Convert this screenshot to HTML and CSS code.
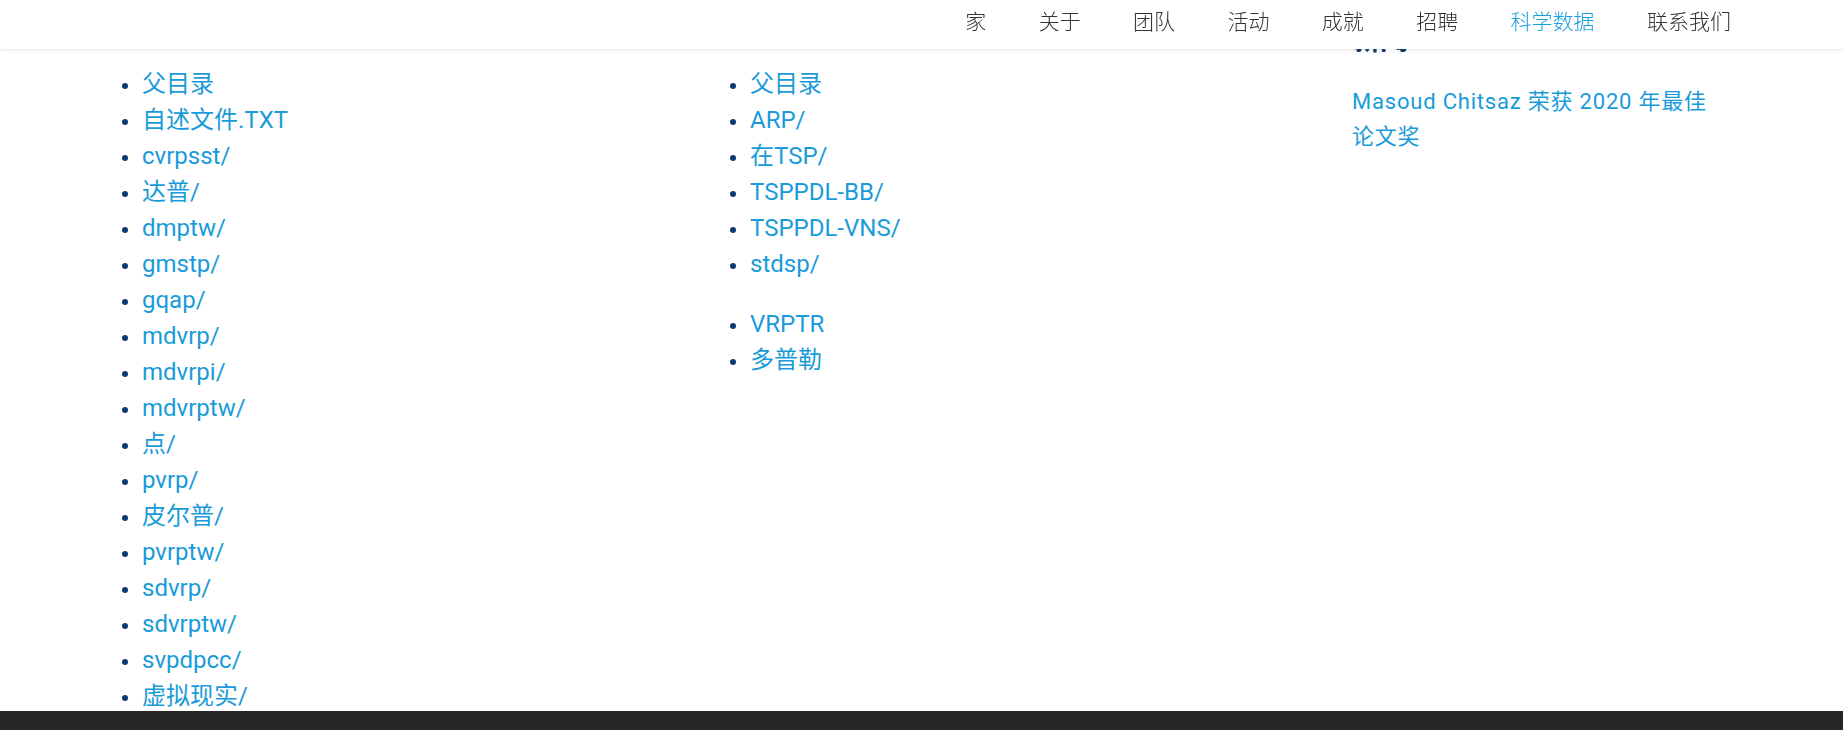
FILE: index.html
```html
<!DOCTYPE html>
<html lang="zh-CN">
<head>
<meta charset="utf-8">
<title>科学数据</title>
<link rel="stylesheet" href="styles.css">
</head>
<body>
<header class="site-header">
  <nav class="nav">
    <a class="nav-item" href="#">家</a>
    <a class="nav-item" href="#">关于</a>
    <a class="nav-item" href="#">团队</a>
    <a class="nav-item" href="#">活动</a>
    <a class="nav-item" href="#">成就</a>
    <a class="nav-item" href="#">招聘</a>
    <a class="nav-item nav-active" href="#">科学数据</a>
    <a class="nav-item" href="#">联系我们</a>
  </nav>
</header>
<main class="content">
  <section class="col col-one">
    <ul class="dir-list">
      <li><a href="#">父目录</a></li>
      <li><a href="#">自述文件.TXT</a></li>
      <li><a href="#">cvrpsst/</a></li>
      <li><a href="#">达普/</a></li>
      <li><a href="#">dmptw/</a></li>
      <li><a href="#">gmstp/</a></li>
      <li><a href="#">gqap/</a></li>
      <li><a href="#">mdvrp/</a></li>
      <li><a href="#">mdvrpi/</a></li>
      <li><a href="#">mdvrptw/</a></li>
      <li><a href="#">点/</a></li>
      <li><a href="#">pvrp/</a></li>
      <li><a href="#">皮尔普/</a></li>
      <li><a href="#">pvrptw/</a></li>
      <li><a href="#">sdvrp/</a></li>
      <li><a href="#">sdvrptw/</a></li>
      <li><a href="#">svpdpcc/</a></li>
      <li><a href="#">虚拟现实/</a></li>
    </ul>
  </section>
  <section class="col col-two">
    <ul class="dir-list">
      <li><a href="#">父目录</a></li>
      <li><a href="#">ARP/</a></li>
      <li><a href="#">在TSP/</a></li>
      <li><a href="#">TSPPDL-BB/</a></li>
      <li><a href="#">TSPPDL-VNS/</a></li>
      <li><a href="#">stdsp/</a></li>
    </ul>
    <ul class="dir-list">
      <li><a href="#">VRPTR</a></li>
      <li><a href="#">多普勒</a></li>
    </ul>
  </section>
  <aside class="col col-three">
    <h2 class="news-title">新闻</h2>
    <p class="news-item"><a href="#">Masoud Chitsaz 荣获 2020 年最佳论文奖</a></p>
  </aside>
</main>
<footer class="site-footer"></footer>
</body>
</html>
```
FILE: styles.css
```css
html, body {
  margin: 0;
  padding: 0;
}
body {
  background: #ffffff;
  font-family: Roboto, "Noto Sans CJK SC", sans-serif;
  color: #333333;
}
a {
  text-decoration: none;
}

.site-header {
  position: fixed;
  top: 0;
  left: 0;
  right: 0;
  height: 49px;
  background: #ffffff;
  box-shadow: 0 1px 4px rgba(0, 0, 0, 0.10);
  z-index: 10;
}
.nav {
  display: flex;
  justify-content: flex-end;
  gap: 52.4px;
  padding-right: 112px;
  height: 49px;
}
.nav-item {
  font-family: "Noto Sans CJK SC", sans-serif;
  font-weight: 300;
  font-size: 21px;
  line-height: 40px;
  color: #333333;
}
.nav-active {
  color: #1aa0de;
}

.content {
  display: grid;
  grid-template-columns: 608px 622px 1fr;
  padding-left: 122px;
}

.dir-list {
  list-style: none;
  margin: 24px 0;
  padding: 0;
  font-size: 24px;
  line-height: 36px;
}
.col-one .dir-list {
  margin: 66px 0 0;
}
.col-two .dir-list:first-child {
  margin-top: 66px;
}
.dir-list li::before {
  content: "";
  display: inline-block;
  width: 6px;
  height: 6px;
  border-radius: 50%;
  background: #0b3c6c;
  margin-right: 14px;
  vertical-align: middle;
}
.dir-list a,
.news-item a {
  color: #1a9bd9;
}

.col-three {
  width: 366px;
}
.news-title {
  margin: 27px 0 0;
  font-size: 28px;
  line-height: 28px;
  font-weight: 700;
  color: #0b3c6c;
}
.news-item {
  margin: 29px 0 0;
  font-size: 22px;
  line-height: 35px;
  letter-spacing: 0.8px;
}

.site-footer {
  position: fixed;
  left: 0;
  right: 0;
  bottom: 0;
  height: 19px;
  background: #282725;
  z-index: 10;
}
```
